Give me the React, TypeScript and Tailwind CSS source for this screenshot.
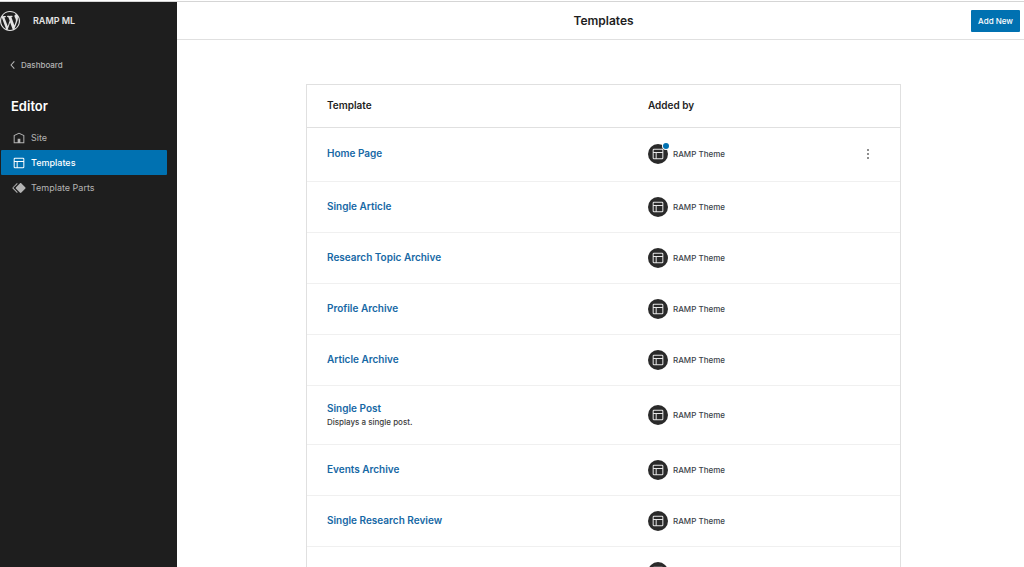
import { ReactNode } from "react"
import clsx from "clsx"

interface IconProps {
  className?: string
}

interface Template {
  title?: string
  description?: string
  theme?: string
  customized?: boolean
}

const templates: Template[] = [
  { title: "Home Page", theme: "RAMP Theme", customized: true },
  { title: "Single Article", theme: "RAMP Theme" },
  { title: "Research Topic Archive", theme: "RAMP Theme" },
  { title: "Profile Archive", theme: "RAMP Theme" },
  { title: "Article Archive", theme: "RAMP Theme" },
  { title: "Single Post", theme: "RAMP Theme", description: "Displays a single post." },
  { title: "Events Archive", theme: "RAMP Theme" },
  { title: "Single Research Review", theme: "RAMP Theme" },
  {},
]

function Icon({ className, children }: IconProps & { children: ReactNode }) {
  return (
    <svg viewBox="0 0 24 24" fill="currentColor" aria-hidden="true" className={clsx("shrink-0", className)}>
      {children}
    </svg>
  )
}

function WordPressLogo() {
  return (
    <svg viewBox="0 0 20 20" fill="currentColor" aria-hidden="true" className="h-5 w-5 shrink-0">
      <path d="M20 10c0-5.51-4.49-10-10-10C4.48 0 0 4.49 0 10c0 5.52 4.48 10 10 10 5.51 0 10-4.48 10-10zM7.78 15.37L4.37 6.22c.55-.02 1.17-.08 1.17-.08.5-.06.44-1.13-.06-1.11 0 0-1.45.11-2.37.11-.18 0-.37 0-.58-.01C4.12 2.69 6.87 1.11 10 1.11c2.33 0 4.45.87 6.05 2.34-.68-.11-1.65.39-1.65 1.58 0 .74.45 1.36.9 2.1.35.61.55 1.36.55 2.46 0 1.49-1.4 5-1.4 5l-3.03-8.37c.54-.02.82-.17.82-.17.5-.05.44-1.25-.06-1.22 0 0-1.44.12-2.38.12-.87 0-2.33-.12-2.33-.12-.5-.03-.56 1.2-.06 1.22l.92.08 1.26 3.41zM17.41 10c.24-.64.74-1.87.43-4.25.7 1.29 1.05 2.71 1.05 4.25 0 3.29-1.73 6.24-4.4 7.78.97-2.59 1.94-5.2 2.92-7.78zM6.1 18.09C3.12 16.65 1.11 13.53 1.11 10c0-1.3.23-2.48.72-3.59C3.25 10.3 4.67 14.2 6.1 18.09zm4.03-6.63l2.58 6.98c-.86.29-1.76.45-2.71.45-.79 0-1.57-.11-2.29-.33.81-2.38 1.62-4.74 2.42-7.1z" />
    </svg>
  )
}

function ChevronLeftIcon({ className }: IconProps) {
  return (
    <Icon className={className}>
      <path d="M14.6 7l-1.2-1L8 12l5.4 6 1.2-1-4.6-5z" />
    </Icon>
  )
}

function HomeIcon({ className }: IconProps) {
  return (
    <Icon className={className}>
      <path d="M12 4L4 7.9V20h16V7.9L12 4zm6.5 14.5H14V13h-4v5.5H5.5V8.8L12 5.7l6.5 3.1v9.7z" />
    </Icon>
  )
}

function LayoutIcon({ className }: IconProps) {
  return (
    <Icon className={className}>
      <path d="M18 5.5H6a.5.5 0 00-.5.5v3h13V6a.5.5 0 00-.5-.5zm.5 5H10v8h8a.5.5 0 00.5-.5v-7.5zm-10 0h-3V18a.5.5 0 00.5.5h2.5v-8zM6 4h12a2 2 0 012 2v12a2 2 0 01-2 2H6a2 2 0 01-2-2V6a2 2 0 012-2z" />
    </Icon>
  )
}

function SymbolFilledIcon({ className }: IconProps) {
  return (
    <Icon className={className}>
      <path d="M21.3 10.8l-5.6-5.6c-.7-.7-1.8-.7-2.5 0l-5.6 5.6c-.7.7-.7 1.8 0 2.5l5.6 5.6c.3.3.8.5 1.2.5s.9-.2 1.2-.5l5.6-5.6c.8-.7.8-1.9.1-2.5zm-17.6 1L10 5.5l-1-1-6.3 6.3c-.7.7-.7 1.8 0 2.5L9 19.5l1.1-1.1-6.3-6.3c-.2 0-.2-.2-.1-.3z" />
    </Icon>
  )
}

function MoreVerticalIcon({ className }: IconProps) {
  return (
    <Icon className={className}>
      <path d="M13 19h-2v-2h2v2zm0-6h-2v-2h2v2zm0-6h-2V5h2v2z" />
    </Icon>
  )
}

const navItems = [
  { label: "Site", icon: HomeIcon },
  { label: "Templates", icon: LayoutIcon, active: true },
  { label: "Template Parts", icon: SymbolFilledIcon },
]

function Sidebar() {
  return (
    <aside className="w-[177px] shrink-0 bg-[#1e1e1e] text-[#b4b4b4]">
      <div className="flex h-[38px] items-center gap-[13px] text-[#e4e4e4]">
        <WordPressLogo />
        <span className="text-[9px] font-semibold">RAMP ML</span>
      </div>
      <a href="#dashboard" className="mt-4 ml-[5px] flex h-[18px] items-center text-[8px] font-medium">
        <ChevronLeftIcon className="h-4 w-4" />
        Dashboard
      </a>
      <h2 className="mt-6 ml-[11px] text-[13px] leading-4 font-semibold text-white">Editor</h2>
      <nav className="mt-[11px] mr-[10px] ml-px">
        {navItems.map(({ label, icon: NavIcon, active }) => (
          <a
            key={label}
            href={"#" + label.toLowerCase().replace(" ", "-")}
            aria-current={active ? "page" : undefined}
            className={clsx(
              "flex h-[25px] items-center gap-1 rounded-[1px] pl-[10px] text-[9px]",
              active && "bg-[#0071b1] font-medium text-white"
            )}
          >
            <NavIcon className="h-4 w-4" />
            {label}
          </a>
        ))}
      </nav>
    </aside>
  )
}

function TemplateRow({ template }: { template: Template }) {
  const { title, description, theme, customized } = template

  return (
    <tr
      className={clsx(
        "border-t",
        customized ? "h-[54px] border-[#e0e0e0]" : "border-[#f0f0f0]",
        description ? "h-[59px]" : !customized && "h-[51px]"
      )}
    >
      <td className="pb-[2px] pl-5">
        {title && (
          <a href="#template" className="block text-[10px] leading-4 font-semibold text-[#1668a5]">
            {title}
          </a>
        )}
        {description && <p className="text-[8px] leading-3 font-medium text-[#3c3c3c]">{description}</p>}
      </td>
      <td>
        <div className="flex items-center gap-[5px]">
          <span className="relative flex h-5 w-5 items-center justify-center rounded-full bg-[#2a2a2a] text-[#e8e8e8]">
            <LayoutIcon className="h-4 w-4" />
            {customized && (
              <span className="absolute -top-px -right-px h-[6px] w-[6px] rounded-full bg-[#0071b1] ring-1 ring-white" />
            )}
          </span>
          {theme && <span className="text-[8px] font-medium text-[#3c434a]">{theme}</span>}
        </div>
      </td>
      <td>
        {customized && (
          <button type="button" aria-label="Actions" className="mr-6 ml-auto flex text-[#1e1e1e]">
            <MoreVerticalIcon className="h-4 w-4" />
          </button>
        )}
      </td>
    </tr>
  )
}

export default function App() {
  return (
    <div className="flex h-screen flex-col overflow-hidden bg-white font-['Inter','Liberation_Sans',sans-serif] text-[#1e1e1e]">
      <div className="h-[2px] shrink-0 border-b border-[#d5d5d5]" />
      <div className="flex min-h-0 flex-1">
        <Sidebar />
        <div className="flex min-w-0 flex-1 flex-col">
          <header className="grid h-[38px] shrink-0 grid-cols-[1fr_auto_1fr] items-center border-b border-[#e0e0e0] pr-1 pl-[10px]">
            <h1 className="col-start-2 text-[12px] font-semibold">Templates</h1>
            <button
              type="button"
              className="flex h-[22px] items-center justify-self-end rounded-[1px] bg-[#0071b1] px-[7px] text-[8px] font-medium text-white"
            >
              Add New
            </button>
          </header>
          <main className="min-h-0 flex-1 overflow-hidden pt-11 pl-[6px]">
            <div className="mx-auto w-full max-w-[595px] border border-[#e0e0e0]">
              <table className="w-full table-fixed border-collapse">
                <thead>
                  <tr className="h-[42px] text-left text-[10px]">
                    <th scope="col" className="w-[341px] pl-5 font-semibold">
                      Template
                    </th>
                    <th scope="col" className="font-semibold">
                      Added by
                    </th>
                    <td className="w-[60px]" />
                  </tr>
                </thead>
                <tbody>
                  {templates.map((template, i) => (
                    <TemplateRow key={i} template={template} />
                  ))}
                </tbody>
              </table>
            </div>
          </main>
        </div>
      </div>
    </div>
  )
}
